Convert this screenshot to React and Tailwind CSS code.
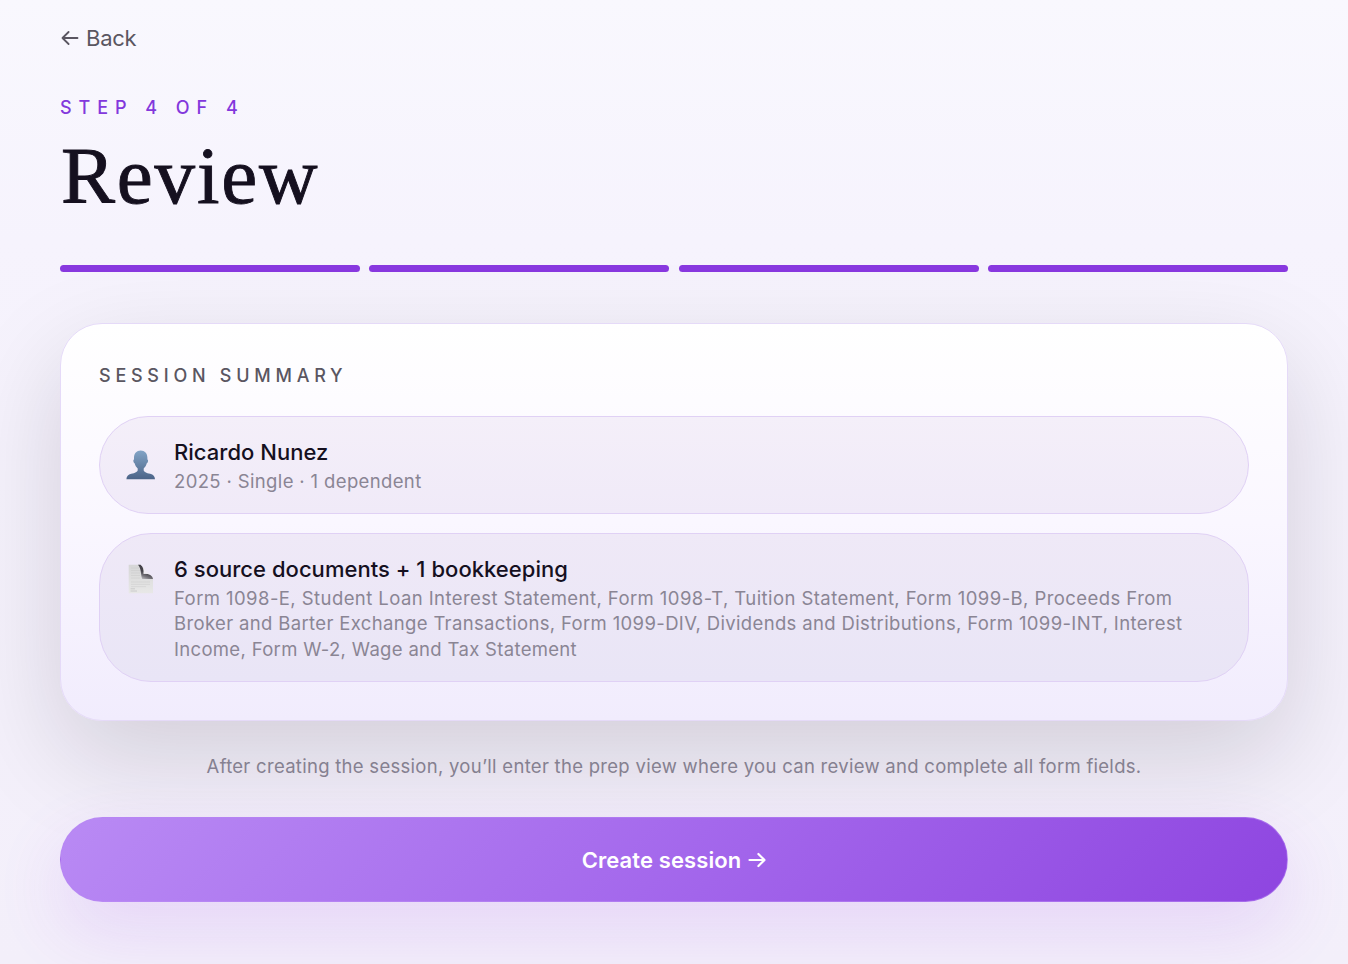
import React from 'react'

const steps = [1, 2, 3, 4]

const ArrowIcon = ({ className, strokeWidth }) => (
    <svg className={className} viewBox="0 0 18 16" fill="none" stroke="currentColor" strokeWidth={strokeWidth} strokeLinecap="round" strokeLinejoin="round">
        <path d="M1.5 8H16.5M10.4 2L16.5 8L10.4 14" />
    </svg>
)

const PersonIcon = () => (
    <svg className="h-[30px] w-[30px]" viewBox="0 0 30 30">
        <defs>
            <linearGradient id="person" x1="0" y1="0" x2="0" y2="1">
                <stop offset="0" stopColor="#82a4c6" />
                <stop offset="1" stopColor="#4c6488" />
            </linearGradient>
        </defs>
        <path
            fill="url(#person)"
            d="M14.7 .6C10.6 .6 8 3.6 8 7.8V9.6C7.3 9.8 7.2 10.7 7.5 11.8C7.7 12.7 8.1 13.1 8.6 13.2C9.2 15.4 10.2 17 11.7 18.4V20C11.7 22 9 23 5.2 23.8C2 24.5 .6 26.6 .4 29.2H29C28.8 26.6 27.4 24.5 24.2 23.8C20.4 23 17.7 22 17.7 20V18.4C19.2 17 20.2 15.4 20.8 13.2C21.3 13.1 21.7 12.7 21.9 11.8C22.2 10.7 22.1 9.8 21.4 9.6V7.8C21.4 3.6 18.8 .6 14.7 .6Z"
        />
    </svg>
)

const DocumentIcon = () => (
    <svg className="h-[30px] w-[30px]" viewBox="0 0 30 30">
        <defs>
            <linearGradient id="sheet" x1="0" y1="0" x2="0" y2="1">
                <stop offset="0" stopColor="#d6d6d7" />
                <stop offset="1" stopColor="#e8e8e7" />
            </linearGradient>
            <linearGradient id="curl" gradientUnits="userSpaceOnUse" x1="19" y1="8" x2="16" y2="15.5">
                <stop offset="0" stopColor="#45434a" />
                <stop offset="0.5" stopColor="#77757b" />
                <stop offset="1" stopColor="#c6c5c8" />
            </linearGradient>
        </defs>
        <path d="M2.7 .8H14.5L27 14V29.3H2.7Z" fill="url(#sheet)" />
        <path d="M5 4H13M5 6.5H14M5 9H14M5 11.5H14M5 14H14M5 18H24M5 20.4H24M5 22.6H20" stroke="#c6c6c7" strokeWidth=".8" opacity=".5" />
        <path d="M4.6 24.8H9M4.6 27H11" stroke="#b8b8b8" strokeWidth=".8" opacity=".7" />
        <path d="M12 .8H14.5C17 2.4 18 6 17.4 9.8C22 9.4 26.3 10.6 27 15H16.2C14.8 12 15.4 4 12 .8Z" fill="url(#curl)" />
        <path d="M14.7 .8C17.8 2.6 18.3 6 17.8 9.9C22 9.5 25.6 10.4 27 13.6Z" fill="#efebf2" />
    </svg>
)

const SummaryRow = ({ icon, title, className, children }) => (
    <div className={`flex items-start rounded-[52px] border border-[#e0d1f5] pl-[26px] pr-8 ${className}`}>
        {icon}
        <div className="ml-[18px] flex-1 pt-5">
            <p className="text-[22px] leading-[30px] font-medium tracking-[0.03px] text-[#15101f]">{title}</p>
            <p className="mt-[1.7px] text-[18.5px] leading-[25.5px] whitespace-nowrap text-[#8a8594]">{children}</p>
        </div>
    </div>
)

const App = () => {
    return (
        <div className="h-[964px] overflow-hidden bg-linear-to-b from-[#f9f8fe] via-[#f6f3fd] via-25% to-[#f3effa] px-[60px] pt-[22px] font-['Inter',sans-serif]">
            <button className="ml-px flex h-8 items-center gap-[7px] text-[22px] tracking-[-0.25px] text-[#5a5661]">
                <ArrowIcon className="h-4 w-[18px] rotate-180" strokeWidth={1.8} />
                <span>Back</span>
            </button>

            <p className="mt-[42px] text-[18px] leading-6 font-medium tracking-[6.95px] text-[#8338dc]">STEP 4 OF 4</p>
            <h1 className="mt-[10px] ml-px font-['Liberation_Serif',serif] text-[81px] leading-[92px] tracking-[1.8px] text-[#15101f] [-webkit-text-stroke:0.9px_#15101f]">Review</h1>

            <div className="mt-[43px] flex gap-[9.5px]">
                {steps.map((step) => (
                    <div key={step} className="h-[7px] flex-1 rounded-full bg-[#8838df]" />
                ))}
            </div>

            <section className="mt-[51px] h-[398px] rounded-[42px] border border-[#e5daf8] bg-linear-to-b from-white via-[#faf7ff] via-50% to-[#f1ecfd] px-[38px] pt-[40px] shadow-[0_36px_100px_rgba(20,15,30,0.15)]">
                <h2 className="text-[18px] leading-6 font-medium tracking-[4.75px] text-[#5a5661]">SESSION SUMMARY</h2>
                <SummaryRow
                    className="mt-[28px] h-[98px] bg-linear-to-b from-[#f4eff9] to-[#f0eaf8]"
                    icon={<div className="mt-[33px]"><PersonIcon /></div>}
                    title="Ricardo Nunez"
                >
                    <span className="tracking-[0.36px]">2025 · Single · 1 dependent</span>
                </SummaryRow>
                <SummaryRow
                    className="mt-[19px] h-[149px] bg-linear-to-b from-[#efe9f7] to-[#e9e5f6]"
                    icon={<div className="mt-[30px]"><DocumentIcon /></div>}
                    title="6 source documents + 1 bookkeeping"
                >
                    <span className="block tracking-[0.425px]">Form 1098-E, Student Loan Interest Statement, Form 1098-T, Tuition Statement, Form 1099-B, Proceeds From</span>
                    <span className="block tracking-[0.35px]">Broker and Barter Exchange Transactions, Form 1099-DIV, Dividends and Distributions, Form 1099-INT, Interest</span>
                    <span className="block tracking-[0.32px]">Income, Form W-2, Wage and Tax Statement</span>
                </SummaryRow>
            </section>

            <p className="relative mt-[32px] text-center text-[18.5px] leading-[26px] tracking-[0.285px] text-[#858090]">
                After creating the session, you’ll enter the prep view where you can review and complete all form fields.
            </p>

            <button className="relative mt-[38px] flex h-[85px] w-full items-center justify-center gap-[7px] rounded-full border border-[#b98af5]/50 bg-[linear-gradient(135deg,#b98af4_0%,#a468ec_50%,#8e45e0_100%)] text-[22px] font-semibold tracking-[0.1px] text-white shadow-[0_28px_70px_rgba(147,51,234,0.14)]">
                <span className="pt-0.5">Create session</span>
                <ArrowIcon className="h-4 w-[18px]" strokeWidth={2.2} />
            </button>
        </div>
    )
}

export default App
